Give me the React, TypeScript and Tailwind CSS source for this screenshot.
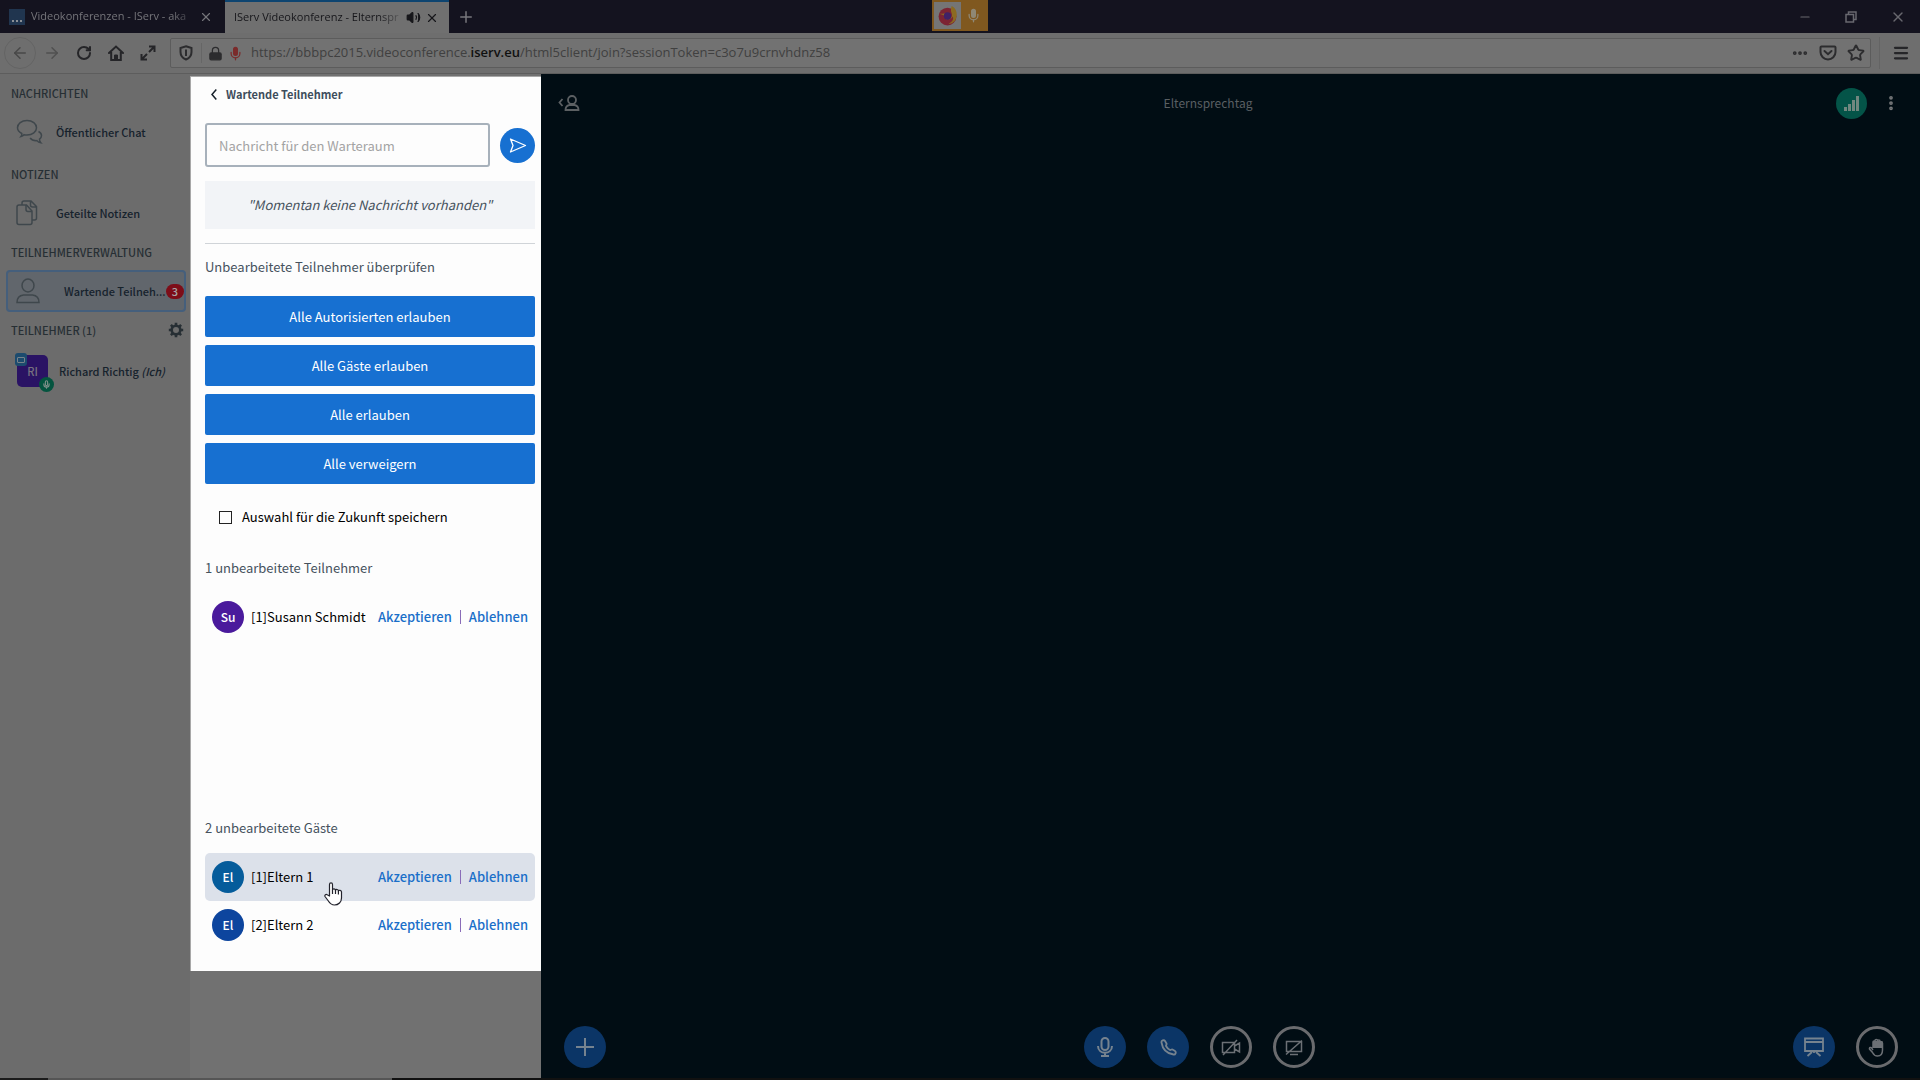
import React, { useState } from "react";
import {
  ArrowLeft,
  ArrowRight,
  Ellipsis,
  EllipsisVertical,
  Lock,
  Menu,
  Mic,
  Minus,
  Plus,
  RotateCw,
  Star,
  Volume2,
  X,
} from "lucide-react";

const actions = [
  "Alle Autorisierten erlauben",
  "Alle Gäste erlauben",
  "Alle erlauben",
  "Alle verweigern",
];

const BrowserTabs = () => {
  return (
    <div className="grid h-[33px] grid-cols-[1fr_auto_1fr] bg-[#14131f] font-['Open_Sans',sans-serif] text-[11px]">
      <div className="flex">
        <div className="flex w-[225px] items-center pr-[12px] pl-[9px] text-[#75757a]">
          <div className="flex h-4 w-4 items-end justify-center gap-[2px] bg-[#20354f] pb-[3px]">
            <span className="h-[2px] w-[2px] bg-[#8a8f95]" />
            <span className="h-[2px] w-[2px] bg-[#8a8f95]" />
            <span className="h-[2px] w-[2px] bg-[#8a8f95]" />
          </div>
          <p className="ml-[6px] w-[168px] whitespace-nowrap [mask-image:linear-gradient(to_right,black_84%,transparent_100%)]">
            Videokonferenzen - IServ - aka
          </p>
          <button type="button" aria-label="Tab schließen">
            <X size={14} strokeWidth={2} />
          </button>
        </div>
        <div className="flex w-[224px] items-center border-t-2 border-[#0d4470] bg-[#707070] pr-[10px] pl-[9px] text-[#16161a]">
          <p className="w-[173px] whitespace-nowrap [mask-image:linear-gradient(to_right,black_84%,transparent_100%)]">
            IServ Videokonferenz - Elternspr
          </p>
          <Volume2 size={15} fill="currentColor" />
          <button type="button" aria-label="Tab schließen" className="ml-1">
            <X size={14} strokeWidth={2} />
          </button>
        </div>
        <button type="button" aria-label="Neuer Tab" className="ml-2 text-[#77777c]">
          <Plus size={18} strokeWidth={2} />
        </button>
      </div>
      <div className="flex h-[31px] w-[56px] border-2 border-[#80581f] bg-[#80581f]">
        <div className="flex w-[27px] items-center justify-center bg-[#757575]">
          <svg width="21" height="21" viewBox="0 0 20 20">
            <circle cx="10" cy="11" r="8.500" fill="#7c2433" />
            <path d="M2 8c1 1 3 0 5 0 3 0 4 4 2 6 4 0 6-3 5-6-1-2-1-4 0-7 4 2 6 7 4 12-1 3-4 5-7 5 4-2 5-5 4-7-2 4-7 4-8 0 0-2-3-2-5-3z" fill="#8c6a20" />
            <circle cx="10" cy="10.500" r="3.500" fill="#3f2267" />
          </svg>
        </div>
        <div className="flex flex-1 items-center justify-center text-[#8f8875]">
          <Mic size={15} className="[&>rect]:fill-current" />
        </div>
      </div>
      <div className="flex items-center justify-end gap-8 pr-[14px] text-[#68686f]">
        <button type="button" aria-label="Minimieren">
          <Minus size={14} strokeWidth={2} />
        </button>
        <button type="button" aria-label="Wiederherstellen">
          <svg width="14" height="14" viewBox="0 0 14 14" fill="none" stroke="currentColor" strokeWidth="1.500">
            <rect x="2" y="4.500" width="7.500" height="7.500" />
            <path d="M4.500 4.500V2H12v7.500H9.500" />
          </svg>
        </button>
        <button type="button" aria-label="Schließen">
          <X size={16} strokeWidth={2} />
        </button>
      </div>
    </div>
  );
};

const BrowserNav = () => {
  return (
    <div className="flex h-[41px] items-center border-b border-[#5d5d5d] bg-[#6e6e6e] pr-[10px] pl-1 text-[#252528]">
      <button
        type="button"
        aria-label="Zurück"
        className="flex h-8 w-8 items-center justify-center rounded-full border border-[#646464] text-[#484848]"
      >
        <ArrowLeft size={18} />
      </button>
      <button type="button" aria-label="Vor" className="flex w-8 justify-center text-[#505050]">
        <ArrowRight size={18} />
      </button>
      <button type="button" aria-label="Neu laden" className="flex w-8 justify-center">
        <RotateCw size={16} strokeWidth={3} />
      </button>
      <button type="button" aria-label="Startseite" className="flex w-8 justify-center">
        <svg width="16" height="16" viewBox="0 0 16 16" fill="none" stroke="currentColor" strokeWidth="2">
          <path d="M1 8l7-6.500L15 8M3.200 7v8h9.600V7" strokeLinecap="round" />
          <path d="M6.500 15v-5h3v5" fill="currentColor" strokeWidth="1" />
        </svg>
      </button>
      <button type="button" aria-label="Vollbild" className="flex w-8 justify-center">
        <svg width="16" height="16" viewBox="0 0 16 16" fill="none" stroke="currentColor" strokeWidth="2">
          <path d="M9 7l5-5M9 1.500h5.500V7M7 9l-5 5M7 14.500H1.500V9" />
        </svg>
      </button>
      <div className="ml-[6px] flex h-[30px] flex-1 items-center rounded-[2px] border border-[#5c5c5c] bg-[#727272] pr-[5px] pl-2 text-[#2c2c2e]">
        <svg width="14" height="16" viewBox="0 0 14 16" fill="none" stroke="currentColor" strokeWidth="2">
          <path d="M7 1.200L12.500 3v4c0 3.500-2 6-5.500 7.500C3.500 13 1.500 10.500 1.500 7V3z" />
          <path d="M7 4.500v6.500" />
        </svg>
        <span className="ml-2 h-5 w-px bg-[#666666]" />
        <Lock size={15} strokeWidth={2} className="ml-[6px] [&>rect]:fill-current" />
        <Mic size={15} strokeWidth={2} className="ml-[5px] text-[#7b2b2b] [&>rect]:fill-current" />
        <div
          role="textbox"
          aria-label="Adresse"
          className="ml-2 flex-1 font-['Open_Sans',sans-serif] text-[13px] whitespace-nowrap text-[#404040]"
        >
          https://bbbpc2015.videoconference.
          <span className="font-semibold text-[#101010]">iserv.eu</span>
          /html5client/join?sessionToken=c3o7u9crnvhdnz58
        </div>
        <div className="flex items-center gap-[10px]">
          <button type="button" aria-label="Mehr">
            <Ellipsis size={18} strokeWidth={3} />
          </button>
          <button type="button" aria-label="Pocket">
            <svg width="18" height="16" viewBox="0 0 18 16" fill="none" stroke="currentColor" strokeWidth="2">
              <path d="M2.500 1.500h13a1 1 0 0 1 1 1V7a7.500 7.500 0 0 1-15 0V2.500a1 1 0 0 1 1-1z" />
              <path d="M5.500 6L9 9.200 12.500 6" strokeLinecap="round" />
            </svg>
          </button>
          <button type="button" aria-label="Lesezeichen">
            <Star size={18} strokeWidth={2.5} />
          </button>
        </div>
      </div>
      <span className="ml-2 h-8 w-px bg-[#646464]" />
      <button type="button" aria-label="Menü" className="ml-3">
        <Menu size={18} strokeWidth={3} />
      </button>
    </div>
  );
};

const SidebarTitle = ({ children }: any) => {
  return <h2 className="pl-[11px] text-[11px] leading-5 font-medium text-[#272f34]">{children}</h2>;
};

const Sidebar = () => {
  return (
    <nav className="flex w-[190px] shrink-0 flex-col gap-2 bg-[#6c6c6c] pt-[9px] text-[11px] font-medium text-[#16222c]">
      <SidebarTitle>NACHRICHTEN</SidebarTitle>
      <button type="button" className="mb-[3px] flex h-[42px] items-center pl-4">
        <svg width="27" height="26" viewBox="0 0 27 26" fill="none" stroke="#3f474c" strokeWidth="1.500">
          <path d="M5 17.500c.8-1 1-2 .8-3C3.500 13.200 1.500 11.500 1.500 8.800 1.500 4.700 5.500 1.500 11 1.500s9.500 3.200 9.500 7.300-4 7.200-9.500 7.200c-1.200 0-2 0-3-.3-.8.900-1.800 1.500-3 1.800z" />
          <path d="M22.500 12.500c2 1 3 2.300 3 4 0 1.600-.8 2.800-2 3.700 0 1.600.3 2.500 1.300 3.500-1.800-.2-3-1-3.900-2.100-3.300.2-5.500-.8-6.800-2.600" />
        </svg>
        <span className="ml-[13px]">Öffentlicher Chat</span>
      </button>
      <SidebarTitle>NOTIZEN</SidebarTitle>
      <button type="button" className="flex h-[42px] items-center pl-4">
        <svg width="24" height="26" viewBox="0 0 24 26" fill="none" stroke="#3f474c" strokeWidth="1.500">
          <path d="M3 5h7.500L16 11v11.500a2 2 0 0 1-2 2H3a2 2 0 0 1-2-2V7a2 2 0 0 1 2-2z" />
          <path d="M10 5v4.500a2 2 0 0 0 2 2h4" />
          <path d="M6 5V3a2 2 0 0 1 2-2h7l5.500 5.500V18a2 2 0 0 1-2 2H16M14.500 1v4a2 2 0 0 0 2 2h4" />
        </svg>
        <span className="ml-4">Geteilte Notizen</span>
      </button>
      <SidebarTitle>TEILNEHMERVERWALTUNG</SidebarTitle>
      <button
        type="button"
        className="mr-1 ml-[6px] flex h-[42px] items-center rounded-[4px] border-2 border-[#455f7c] bg-[#61666c] pl-2"
      >
        <svg width="24" height="26" viewBox="0 0 24 26" fill="none" stroke="#3f474c" strokeWidth="1.500">
          <ellipse cx="12" cy="7.500" rx="6" ry="6.500" />
          <path d="M1 24.500c0-4.500 2-7 6.500-7.500h9c4.500.5 6.500 3 6.500 7.500z" />
        </svg>
        <span className="ml-6 flex-1 text-left whitespace-nowrap">Wartende Teilneh...</span>
        <span className="flex h-[15px] w-[18px] shrink-0 items-center justify-center rounded-full bg-[#7d0d18] text-[#a5a5a5]">
          3
        </span>
      </button>
      <div className="flex items-center justify-between pr-[6px]">
        <SidebarTitle>TEILNEHMER (1)</SidebarTitle>
        <button type="button" aria-label="Teilnehmer verwalten">
          <svg width="16" height="16" viewBox="0 0 16 16" fill="none" stroke="#272f34">
            <circle cx="8" cy="8" r="4.300" strokeWidth="2.600" />
            <path
              d="M8 .8v2.400M8 12.800v2.400M.8 8h2.400M12.800 8h2.400M2.900 2.900l1.700 1.700M11.400 11.400l1.700 1.700M2.900 13.100l1.700-1.700M11.400 4.600l1.700-1.700"
              strokeWidth="2.600"
            />
          </svg>
        </button>
      </div>
      <button type="button" className="flex h-[46px] items-center pl-[17px]">
        <span className="relative flex h-8 w-[31px] items-center justify-center rounded-[5px] bg-[#2a1364] text-[#77717f]">
          RI
          <span className="absolute -top-[2px] -left-[2px] flex h-[13px] w-[12px] items-center justify-center rounded-[3px] bg-[#1c4b6e]">
            <span className="h-[6px] w-2 rounded-[1px] border border-[#77828a]" />
          </span>
          <span className="absolute -right-[6px] -bottom-[5px] flex h-[15px] w-[15px] items-center justify-center rounded-full bg-[#04543f] text-[#7d8f89]">
            <Mic size={9} strokeWidth={3} />
          </span>
        </span>
        <span className="ml-[11px]">
          Richard Richtig <em>(Ich)</em>
        </span>
      </button>
    </nav>
  );
};

const GuestRow = ({ initials, name, color, active }: any) => {
  return (
    <li
      className={`relative flex h-12 items-center rounded-[5px] pr-[7px] pl-[7px] ${
        active ? "bg-[#dce1ea]" : ""
      }`}
    >
      <span
        className={`flex h-8 w-8 items-center justify-center rounded-full text-[12px] font-medium text-white ${color}`}
      >
        {initials}
      </span>
      <span className="ml-[7px] flex-1 text-black">{name}</span>
      <button type="button" className="font-medium text-[#1a6fc9]">
        Akzeptieren
      </button>
      <span className="mx-[8px] h-[14px] w-px bg-[#8a6cb8]" />
      <button type="button" className="font-medium text-[#1a6fc9]">
        Ablehnen
      </button>
      {active && (
        <svg
          className="absolute top-[29px] left-[119px]"
          width="19"
          height="24"
          viewBox="0 0 19 24"
          fill="white"
          stroke="#22222c"
          strokeWidth="1.200"
          strokeLinejoin="round"
        >
          <path d="M5.500 14V2.500C5.500.3 8.500.3 8.500 2.500V8c.3-1.500 2.700-1.500 3 .3.500-1.300 2.700-1 2.900.6.700-1.100 2.900-.8 3.100 1V16c0 4-3 7-7 7-3.500 0-5-2-6.500-4.500L1 14.500c-.6-1.500 1-2.700 2.200-1.700z" />
          <path d="M8.500 8v4M11.500 8.300V12M14.400 9v3.500" fill="none" />
        </svg>
      )}
    </li>
  );
};

const WaitingPanel = () => {
  const [message, setMessage] = useState<string>("");
  const [remember, setRemember] = useState<boolean>(false);

  return (
    <aside className="w-[351px] shrink-0 bg-[#717171] pt-[2px]">
      <div className="border-t border-l border-[#a8a8a8] bg-[#fdfdfd] pt-[7px] pr-[6px] pb-[22px] pl-[14px] text-[13px] leading-5 text-[#46525d]">
        <button type="button" className="flex items-center pl-[6px] text-[11px] leading-5 font-bold text-[#3d4d5c]">
          <svg width="6" height="11" viewBox="0 0 6 11" fill="none" stroke="#16202a" strokeWidth="1.500">
            <path d="M5.300.5L1 5.500l4.300 5" />
          </svg>
          <span className="ml-[9px]">Wartende Teilnehmer</span>
        </button>
        <form className="mt-[19px] flex items-center justify-between" onSubmit={(e: any) => e.preventDefault()}>
          <input
            type="text"
            aria-label="Nachricht für den Warteraum"
            placeholder="Nachricht für den Warteraum"
            value={message}
            onChange={(e) => setMessage(e.target.value)}
            className="h-[44px] w-[285px] rounded-[3px] border-2 border-[#a7b1bb] px-3 placeholder:text-[#a3a3a3]"
          />
          <button
            type="submit"
            aria-label="Senden"
            className="flex h-[35px] w-[35px] items-center justify-center rounded-full bg-[#1770d1]"
          >
            <svg width="18" height="15" viewBox="0 0 18 15" fill="none" stroke="#fff" strokeWidth="1.300" strokeLinejoin="round">
              <path d="M1.500 1l15 6.500-15 6.500 2.500-6.500z" />
            </svg>
          </button>
        </form>
        <p className="mt-[14px] bg-[#f2f4f7] py-[14px] text-center italic">
          "Momentan keine Nachricht vorhanden"
        </p>
        <hr className="mt-[14px] border-[#d0d4d8]" />
        <p className="mt-[13px]">Unbearbeitete Teilnehmer überprüfen</p>
        <div className="mt-[19px] flex flex-col gap-2">
          {actions.map((a) => {
            return (
              <button key={a} type="button" className="h-[41px] rounded-[2px] bg-[#1770d1] text-white">
                {a}
              </button>
            );
          })}
        </div>
        <label className="mt-[23px] flex items-center pl-[14px] text-black">
          <input
            type="checkbox"
            checked={remember}
            onChange={(e) => setRemember(e.target.checked)}
            className="h-[13px] w-[13px] appearance-none border border-[#222222] checked:bg-[#1770d1]"
          />
          <span className="ml-[10px]">Auswahl für die Zukunft speichern</span>
        </label>
        <section className="mt-[31px] min-h-[260px]">
          <h3>1 unbearbeitete Teilnehmer</h3>
          <ul className="mt-[15px]">
            <GuestRow initials="Su" name="[1]Susann Schmidt" color="bg-[#4a1a9c]" />
          </ul>
        </section>
        <section>
          <h3>2 unbearbeitete Gäste</h3>
          <ul className="mt-[15px]">
            <GuestRow initials="El" name="[1]Eltern 1" color="bg-[#055c9b]" active />
            <GuestRow initials="El" name="[2]Eltern 2" color="bg-[#0d459e]" />
          </ul>
        </section>
      </div>
    </aside>
  );
};

const RoundButton = ({ label, outline, children }: any) => {
  return (
    <button
      type="button"
      aria-label={label}
      className={`flex h-[42px] w-[42px] items-center justify-center rounded-full ${
        outline ? "border-[3px] border-[#6a6b6e] text-[#6c7075]" : "bg-[#0b3566] text-[#76838f]"
      }`}
    >
      {children}
    </button>
  );
};

const Conference = () => {
  return (
    <main className="flex flex-1 flex-col justify-between bg-[#010d14] pr-[22px] pb-[10px] pl-[17px]">
      <header className="flex h-[58px] items-center justify-between pr-[5px]">
        <button type="button" aria-label="Teilnehmerliste" className="flex items-center text-[#5c6063]">
          <svg width="22" height="18" viewBox="0 0 22 18" fill="none" stroke="currentColor" strokeWidth="1.800">
            <path d="M4.500 5L1.500 8.500l3 3.500" />
            <circle cx="14" cy="6" r="4" />
            <path d="M7.500 16c0-3 1.500-4.500 4-5h5c2.500.5 4 2 4 5z" />
          </svg>
        </button>
        <h1 className="text-[12px] text-[#5a5f63]">Elternsprechtag</h1>
        <div className="flex items-center gap-[22px]">
          <button
            type="button"
            aria-label="Verbindungsstatus"
            className="flex h-[31px] w-[31px] items-center justify-center rounded-full bg-[#045448]"
          >
            <svg width="16" height="16" viewBox="0 0 16 16" fill="#71877f">
              <path d="M0 12h3v4H0zM4 9h3v7H4zM8 5h3v11H8zM12 1h3v15h-3z" />
            </svg>
          </button>
          <button type="button" aria-label="Optionen" className="w-1 text-[#77797b]">
            <EllipsisVertical size={18} strokeWidth={3} className="-ml-[7px] max-w-none" />
          </button>
        </div>
      </header>
      <footer className="flex justify-between pl-[6px]">
        <RoundButton label="Aktionen">
          <svg width="20" height="20" viewBox="0 0 20 20" fill="none" stroke="currentColor" strokeWidth="2">
            <path d="M10 1v18M1 10h18" />
          </svg>
        </RoundButton>
        <div className="flex gap-[21px]">
          <RoundButton label="Stummschalten">
            <svg width="18" height="20" viewBox="0 0 18 20" fill="none" stroke="currentColor" strokeWidth="2">
              <rect x="5.500" y="1" width="7" height="12" rx="3.500" />
              <path d="M2 9c0 9 14 9 14 0M9 15.500V19M5 19h8" />
            </svg>
          </RoundButton>
          <RoundButton label="Audio verlassen">
            <svg width="17" height="17" viewBox="0 0 17 17" fill="none" stroke="currentColor" strokeWidth="1.800">
              <path d="M1.500 3.500C1 1.500 4 .5 5 2l1.500 2.500c.5 1-.8 1.800-.5 2.500.8 1.500 2.500 3.200 4 4 .7.300 1.500-1 2.500-.5L15 12c1.500 1 .5 4-1.500 3.500C7 14.500 2.500 10 1.500 3.500z" />
            </svg>
          </RoundButton>
          <RoundButton label="Kamera freigeben" outline>
            <svg width="21" height="17" viewBox="0 0 21 17" fill="none" stroke="currentColor" strokeWidth="1.500">
              <path d="M1.500 3.500h12v10h-12zM13.500 7l5-3v9l-5-3M2 16L16 1" />
            </svg>
          </RoundButton>
          <RoundButton label="Bildschirm freigeben" outline>
            <svg width="18" height="17" viewBox="0 0 18 17" fill="none" stroke="currentColor" strokeWidth="1.500">
              <path d="M1.500 2.500h15v10h-15zM5 15.500h8M1 15.500L17 1.500" />
            </svg>
          </RoundButton>
        </div>
        <div className="flex gap-[21px]">
          <RoundButton label="Präsentation">
            <svg width="22" height="20" viewBox="0 0 22 20" fill="none" stroke="currentColor" strokeWidth="1.800">
              <path d="M2 1.500h18v12.500H2zM2 5h18M11 14v2M9 15l-4.500 4M13 15l4.500 4" />
            </svg>
          </RoundButton>
          <RoundButton label="Hand heben" outline>
            <svg width="18" height="19" viewBox="0 0 18 19" fill="none" stroke="currentColor" strokeWidth="1.500">
              <path d="M5 10V4c0-1.500 2-1.500 2 0V2.500c0-1.500 2.500-1.500 2.500 0V3c0-1.500 2.500-1.500 2.500 0v2c0-1.500 2.500-1.200 2.500.3V12c0 4-2 6-5 6-2.500 0-4-1.500-5-3.500L1.500 11c-.5-1.500 1.500-2 2.200-.8L5 12" />
              <path d="M5 3h9.500v7H5z" fill="currentColor" stroke="none" />
            </svg>
          </RoundButton>
        </div>
      </footer>
    </main>
  );
};

export default function App() {
  return (
    <div className="flex h-screen flex-col overflow-hidden bg-[#14131f] font-['Noto_Sans_CJK_SC',sans-serif]">
      <BrowserTabs />
      <BrowserNav />
      <div className="flex min-h-0 flex-1">
        <Sidebar />
        <WaitingPanel />
        <Conference />
      </div>
      {/* top edge of the taskbar */}
      <div className="flex h-[2px] bg-[#111111]">
        <span className="w-12 bg-[#1c1c1c]" />
        <span className="w-[344px] bg-[#555555]" />
      </div>
    </div>
  );
}
